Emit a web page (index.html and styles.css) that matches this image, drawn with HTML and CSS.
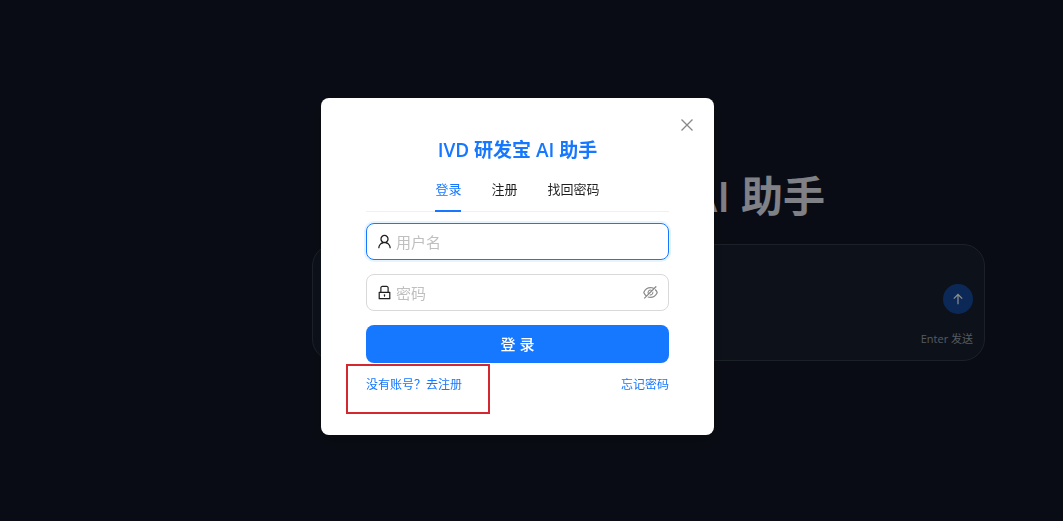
FILE: index.html
```html
<!DOCTYPE html>
<html lang="zh-CN">
<head>
    <meta charset="UTF-8">
    <meta name="viewport" content="width=device-width, initial-scale=1.0">
    <title>IVD 研发宝 AI 助手</title>
    <link rel="stylesheet" href="styles.css">
</head>
<body>

    <main class="home">
        <h1 class="home-title">IVD 研发宝 AI 助手</h1>
        <div class="composer">
            <button type="button" class="send-btn" aria-label="发送">
                <svg viewBox="0 0 16 16" fill="none" stroke="currentColor" stroke-width="1.4"><path d="M8 14V3M3.2 7.6L8 2.8l4.8 4.8"/></svg>
            </button>
            <span class="composer-hint">Enter 发送</span>
        </div>
    </main>

    <div class="overlay">
        <div class="modal" role="dialog" aria-modal="true" aria-labelledby="modal-title">
            <button type="button" class="modal-close" aria-label="关闭">
                <svg viewBox="0 0 14 14" fill="none" stroke="currentColor" stroke-width="1.3"><path d="M1.5 1.5l11 11M12.5 1.5l-11 11"/></svg>
            </button>
            <h2 class="modal-title" id="modal-title">IVD 研发宝 AI 助手</h2>

            <div class="tabs" role="tablist">
                <button type="button" class="tab active" role="tab" aria-selected="true">登录</button>
                <button type="button" class="tab" role="tab" aria-selected="false">注册</button>
                <button type="button" class="tab" role="tab" aria-selected="false">找回密码</button>
            </div>

            <form class="login-form">
                <div class="field focused">
                    <label for="username" aria-label="用户名">
                        <svg class="icon" viewBox="64 64 896 896" fill="currentColor"><path d="M858.5 763.6a374 374 0 00-80.6-119.5 375.63 375.63 0 00-119.5-80.6c-.4-.2-.8-.3-1.2-.5C719.5 518 760 444.7 760 362c0-137-111-248-248-248S264 225 264 362c0 82.7 40.5 156 102.8 201.1-.4.2-.8.3-1.2.5-44.8 18.9-85 46-119.5 80.6a375.63 375.63 0 00-80.6 119.5A371.7 371.7 0 00136 901.8a8 8 0 008 8.2h60c4.4 0 7.9-3.5 8-7.8 2-77.2 33-149.5 87.8-204.3 56.7-56.7 132-87.9 212.2-87.9s155.5 31.2 212.2 87.9C779 752.7 810 825 812 902.2c.1 4.4 3.6 7.8 8 7.8h60a8 8 0 008-8.2c-1-47.8-10.9-94.3-29.5-138.2zM512 534c-45.9 0-89.1-17.9-121.6-50.4S340 407.9 340 362c0-45.9 17.9-89.1 50.4-121.6S466.1 190 512 190s89.1 17.9 121.6 50.4S684 316.1 684 362c0 45.9-17.9 89.1-50.4 121.6S557.9 534 512 534z"/></svg>
                    </label>
                    <input type="text" id="username" placeholder="用户名">
                </div>
                <div class="field">
                    <label for="password" aria-label="密码">
                        <svg class="icon" viewBox="64 64 896 896" fill="currentColor"><path d="M832 464h-68V240c0-70.7-57.3-128-128-128H388c-70.7 0-128 57.3-128 128v224h-68c-17.7 0-32 14.3-32 32v384c0 17.7 14.3 32 32 32h640c17.7 0 32-14.3 32-32V496c0-17.7-14.3-32-32-32zM332 240c0-30.9 25.1-56 56-56h248c30.9 0 56 25.1 56 56v224H332V240zm460 600H232V536h560v304zM484 701v53c0 4.4 3.6 8 8 8h40c4.4 0 8-3.6 8-8v-53a48.01 48.01 0 10-56 0z"/></svg>
                    </label>
                    <input type="password" id="password" placeholder="密码">
                    <button type="button" class="toggle-eye" aria-label="显示密码">
                        <svg class="icon" viewBox="64 64 896 896" fill="currentColor"><path d="M942.2 486.2Q889.47 375.11 816.7 305l-50.88 50.88C807.31 395.53 843.45 447.4 874.7 512 791.5 684.2 673.4 766 512 766q-72.67 0-133.87-22.38L323 798.75Q408 838 512 838q288.3 0 430.2-300.3a60.29 60.29 0 000-51.5zm-63.57-320.64L836 122.88a8 8 0 00-11.32 0L715.31 232.2Q624.86 186 512 186q-288.3 0-430.2 300.3a60.3 60.3 0 000 51.5q56.69 119.4 136.5 191.41L112.48 835a8 8 0 000 11.31L155.17 889a8 8 0 0011.31 0l712.15-712.12a8 8 0 000-11.32zM149.3 512C232.6 339.8 350.7 258 512 258c54.54 0 104.13 9.36 149.12 28.39l-70.3 70.3a176 176 0 00-238.13 238.13l-83.42 83.42C223.1 637.49 183.3 582.28 149.3 512zm246.7 0a112.11 112.11 0 01146.2-106.69L401.31 546.2A112 112 0 01396 512z"/><path d="M508 624c-3.46 0-6.87-.16-10.25-.47l-52.82 52.82a176.09 176.09 0 00227.42-227.42l-52.82 52.82c.31 3.38.47 6.79.47 10.25a111.94 111.94 0 01-112 112z"/></svg>
                    </button>
                </div>
                <button type="submit" class="submit-btn">登 录</button>
            </form>

            <div class="modal-links">
                <span class="marked"><a href="#register">没有账号？去注册</a></span>
                <a href="#forgot">忘记密码</a>
            </div>
        </div>
    </div>

</body>
</html>
```
FILE: styles.css
```css
/* --- Global Setup --- */
* { box-sizing: border-box; }

body {
    margin: 0;
    min-height: 100vh;
    background-color: #121725;
    font-family: 'Open Sans', 'Noto Sans CJK SC', sans-serif;
    font-size: 13px;
}

button, input {
    font-family: inherit;
    font-size: inherit;
    padding: 0;
    border: none;
    background: none;
}
button { cursor: pointer; }
svg { display: block; }
a { text-decoration: none; color: #1677ff; }

/* --- Home page behind the dialog --- */
.home {
    display: flex;
    flex-direction: column;
    align-items: center;
    gap: 18px;
    padding: 166px 78px 0 312px;
}

.home-title {
    margin: 0;
    font-size: 42px;
    line-height: 60px;
    font-weight: 600;
    color: #e8ebf4;
}

.composer {
    display: flex;
    flex-direction: column;
    align-items: flex-end;
    gap: 16px;
    width: 100%;
    padding: 39px 11px 12px;
    background-color: #182030;
    border: 1px solid #343c48;
    border-radius: 22px;
}

.send-btn {
    display: flex;
    align-items: center;
    justify-content: center;
    width: 30px;
    height: 30px;
    border-radius: 50%;
    background-color: #144a9f;
    color: #fff;
}
.send-btn svg { width: 14px; height: 14px; }

.composer-hint {
    font-size: 11px;
    line-height: 18px;
    color: #9aa3b2;
}

/* --- Login dialog --- */
.overlay {
    position: fixed;
    inset: 0;
    display: flex;
    align-items: flex-start;
    justify-content: center;
    padding: 98px 28px 0 0;
    background-color: rgba(0, 0, 0, 0.45);
}

.modal {
    position: relative;
    width: 100%;
    max-width: 393px;
    padding: 38px 45px 40px;
    background-color: #fff;
    border-radius: 8px;
    box-shadow: 0 6px 16px rgba(0, 0, 0, 0.15);
}

.modal-close {
    position: absolute;
    top: 20px;
    right: 20px;
    color: #888;
}
.modal-close svg { width: 14px; height: 14px; }

.modal-title {
    margin: 0 0 12px;
    font-size: 19px;
    line-height: 28px;
    font-weight: 600;
    text-align: center;
    color: #1677ff;
}

.tabs {
    display: flex;
    justify-content: center;
    gap: 30px;
    border-bottom: 1px solid #f0f0f0;
}

.tab {
    margin-bottom: -1px;
    padding: 3px 0 11px;
    line-height: 20px;
    color: #1f1f1f;
    border-bottom: 2px solid transparent;
}
.tab.active { color: #1677ff; border-bottom-color: #1677ff; }

.login-form {
    display: flex;
    flex-direction: column;
    gap: 14px;
    padding-top: 11px;
}

.field {
    display: flex;
    align-items: center;
    gap: 4px;
    height: 37px;
    padding: 0 10px;
    border: 1px solid #d9d9d9;
    border-radius: 8px;
    color: #1f1f1f;
}
.field.focused {
    border-color: #1677ff;
    box-shadow: 0 0 0 2px rgba(5, 145, 255, 0.1);
}
.field input {
    flex: 1;
    min-width: 0;
    font-size: 15px;
    line-height: 22px;
    outline: none;
}
.field input::placeholder { color: #bfbfbf; }

.icon { width: 15px; height: 15px; }
.toggle-eye { color: #8c8c8c; }

.submit-btn {
    height: 38px;
    padding-bottom: 2px;
    border-radius: 8px;
    background-color: #1677ff;
    color: #fff;
    font-size: 15px;
    font-weight: 500;
}

.modal-links {
    display: flex;
    justify-content: space-between;
    padding-top: 12px;
    font-size: 12px;
    line-height: 20px;
}

/* red frame over the register link */
.marked { position: relative; }
.marked::after {
    content: '';
    position: absolute;
    top: -11px;
    right: -28px;
    bottom: -19px;
    left: -20px;
    border: 2px solid #d3282f;
    pointer-events: none;
}
```
